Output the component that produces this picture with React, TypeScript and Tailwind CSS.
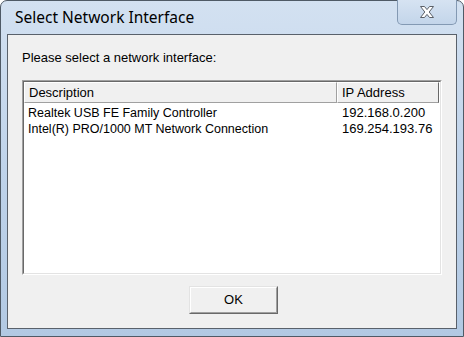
import React from "react";

const body = { fontFamily: '"Liberation Sans", Arial, sans-serif' };

export default function App() {
  return (
    <div className="w-[464px] h-[337px] bg-white">
      <div className="w-[464px] h-[337px] flex flex-col border border-[#4f5a66] rounded-t-[7px] bg-gradient-to-b from-[#d3e1f1] via-[#bfd3ea] to-[#b2c9e3] px-[6px] pb-[7px]">
        {/* title bar */}
        <div className="h-[33px] flex items-start relative">
          <div
            className="pl-[8px] pt-[6px] text-[15.5px] leading-[20px] text-black"
            style={{ fontFamily: '"Noto Sans", "Open Sans", sans-serif' }}
          >
            Select Network Interface
          </div>
          <div className="absolute right-[0px] top-[-1px] w-[60px] h-[25px] border border-t-0 border-[#8399b3] rounded-b-[5px] bg-gradient-to-b from-[#d6e3f2] to-[#c3d5ea] flex items-center justify-center">
            <svg width="16" height="12" viewBox="0 0 16 12">
              <path
                d="M1.5 0.5 H5.5 L8 3.6 L10.5 0.5 H14.5 L10.2 6 L14.5 11.5 H10.5 L8 8.4 L5.5 11.5 H1.5 L5.8 6 Z"
                fill="#ffffff"
                stroke="#5b6068"
                strokeWidth="1"
                strokeLinejoin="round"
              />
            </svg>
          </div>
        </div>
        {/* client */}
        <div className="flex-1 border border-[#59616b] bg-[#f0f0f0] flex flex-col text-[13px] text-black" style={body}>
          <div className="pl-[14px] pt-[15px] h-[30px] leading-[15px]">Please select a network interface:</div>
          <div className="mt-[15px] mx-[14px] h-[195px] border border-t-[#a0a0a0] border-l-[#a0a0a0] border-r-[#ffffff] border-b-[#ffffff]">
            <div className="h-full border border-t-[#696969] border-l-[#696969] border-r-[#e3e3e3] border-b-[#e3e3e3] bg-white flex flex-col">
              <div className="flex h-[21px] pr-[1px]">
                <div className="w-[313px] flex items-center pl-[4px] bg-[#f0f0f0] border-t border-l border-t-white border-l-white border-r border-b border-r-[#a0a0a0] border-b-[#a0a0a0]">
                  Description
                </div>
                <div className="w-[102px] flex items-center pl-[4px] bg-[#f0f0f0] border-t border-l border-t-white border-l-white border-r border-b border-r-[#696969] border-b-[#a0a0a0]">
                  IP Address
                </div>
              </div>
              <div className="pt-[2px] flex flex-col">
                <div className="flex h-[16px] items-center leading-[16px]">
                  <div className="w-[313px] pl-[4px] text-[12.5px]">Realtek USB FE Family Controller</div>
                  <div className="pl-[5px]">192.168.0.200</div>
                </div>
                <div className="flex h-[16px] items-center leading-[16px]">
                  <div className="w-[313px] pl-[4px] text-[12.5px]">Intel(R) PRO/1000 MT Network Connection</div>
                  <div className="pl-[5px]">169.254.193.76</div>
                </div>
              </div>
            </div>
          </div>
          <div className="mt-[11px] flex justify-center pl-[3px]">
            <div className="w-[89px] h-[28px] border border-t-[#e3e3e3] border-l-[#e3e3e3] border-r-[#696969] border-b-[#696969]">
              <div className="h-full border border-t-white border-l-white border-r-[#a0a0a0] border-b-[#a0a0a0] bg-[#f0f0f0] flex items-center justify-center">
                OK
              </div>
            </div>
          </div>
        </div>
      </div>
    </div>
  );
}
